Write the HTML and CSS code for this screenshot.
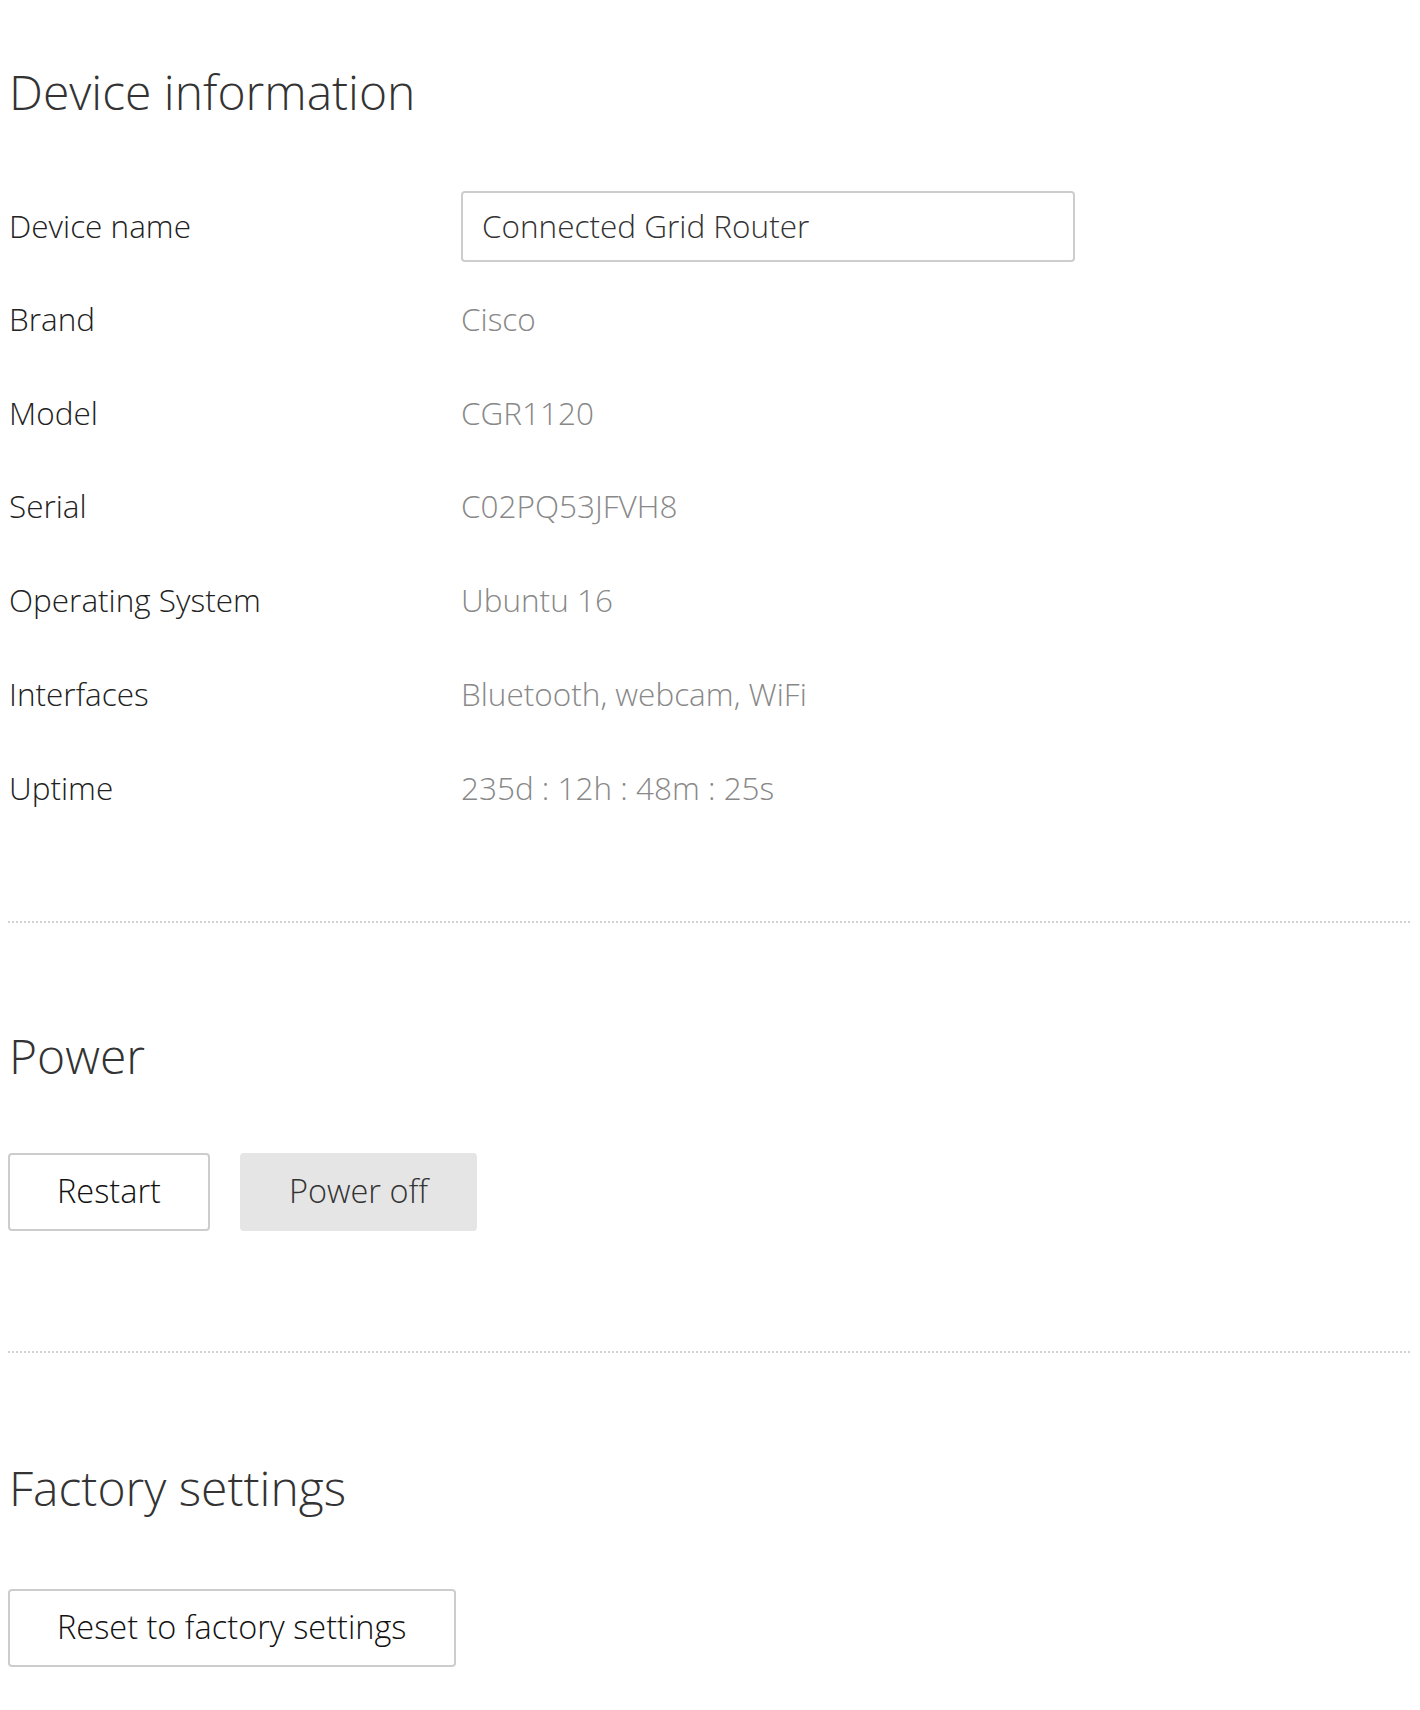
FILE: index.html
```html
<!DOCTYPE html>
<html lang="en">
<head>
<meta charset="utf-8">
<title>Device information</title>
<link rel="stylesheet" href="styles.css">
</head>
<body>
<main class="page">
  <section class="section section-info">
    <h1 class="title title-first">Device information</h1>
    <div class="info">
      <div class="row">
        <label class="label" for="device-name">Device name</label>
        <input class="input" id="device-name" type="text" value="Connected Grid Router">
      </div>
      <div class="row"><span class="label">Brand</span><span class="value">Cisco</span></div>
      <div class="row"><span class="label">Model</span><span class="value">CGR1120</span></div>
      <div class="row"><span class="label">Serial</span><span class="value">C02PQ53JFVH8</span></div>
      <div class="row"><span class="label">Operating System</span><span class="value">Ubuntu 16</span></div>
      <div class="row"><span class="label">Interfaces</span><span class="value">Bluetooth, webcam, WiFi</span></div>
      <div class="row"><span class="label">Uptime</span><span class="value">235d : 12h : 48m : 25s</span></div>
    </div>
  </section>
  <hr class="divider divider-first">
  <section class="section section-power">
    <h2 class="title">Power</h2>
    <div class="actions">
      <button class="btn" type="button">Restart</button>
      <button class="btn btn-neutral" type="button">Power off</button>
    </div>
  </section>
  <hr class="divider divider-second">
  <section class="section section-factory">
    <h2 class="title">Factory settings</h2>
    <div class="actions">
      <button class="btn" type="button">Reset to factory settings</button>
    </div>
  </section>
</main>
</body>
</html>
```

FILE: styles.css
```css
html, body {
  margin: 0;
  padding: 0;
  background: #ffffff;
}

body {
  font-family: "Open Sans", "Liberation Sans", sans-serif;
  font-weight: 300;
  color: #111111;
}

.page {
  padding: 0 10px 0 8px;
}

.section {
  margin: 0;
}

.title {
  margin: 0;
  font-size: 48px;
  line-height: 64px;
  font-weight: 300;
  color: #333333;
  padding-left: 1px;
}

.title-first {
  margin-top: 60px;
  margin-bottom: 67px;
}

.info {
  display: flex;
  flex-direction: column;
  gap: 23.75px;
}

.row {
  display: grid;
  grid-template-columns: 453px 614px;
  align-items: center;
  height: 70px;
}

.label {
  font-size: 31.5px;
  line-height: 40px;
  color: #222222;
  padding-left: 1px;
  margin-top: -2px;
}

.value {
  font-size: 31.5px;
  line-height: 40px;
  color: #888888;
  padding-left: 0;
  margin-top: -2px;
}

.input {
  box-sizing: border-box;
  width: 614px;
  height: 71px;
  margin: 0;
  padding: 0 19px 3px 19px;
  border: 2px solid #cdcdcd;
  border-radius: 4px;
  font-family: inherit;
  font-weight: 300;
  font-size: 31.5px;
  color: #333333;
  background: #ffffff;
  outline: none;
}

.divider {
  margin: 0;
  height: 0;
  border: 0;
  border-top: 2px dotted #d2d2d2;
}

.divider-first {
  margin-top: 97px;
}

.divider-second {
  margin-top: 120px;
}

.section-power .title {
  margin-top: 101px;
  margin-bottom: 65px;
}

.section-factory .title {
  margin-top: 103px;
  margin-bottom: 69px;
}

.actions {
  display: flex;
  gap: 30px;
}

.btn {
  box-sizing: border-box;
  height: 78px;
  margin: 0;
  padding: 0 47px 2px 47px;
  border: 2px solid #cdcdcd;
  border-radius: 4px;
  background: #ffffff;
  font-family: inherit;
  font-weight: 300;
  font-size: 32.5px;
  color: #111111;
  cursor: pointer;
}

.btn-neutral {
  background: #e5e5e5;
  border-color: #e5e5e5;
  color: #333333;
}
```
